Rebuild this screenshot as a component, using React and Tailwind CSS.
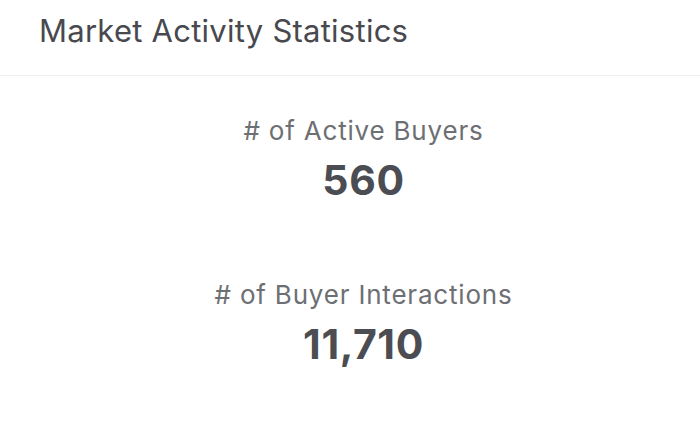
import React from 'react';

const stats = [
    { label: '# of Active Buyers', value: '560' },
    { label: '# of Buyer Interactions', value: '11,710' },
];

const App = () => {
    return (
        <div className="w-[700px] h-[436px] bg-white overflow-hidden" style={{ fontFamily: 'Inter, "Noto Sans", sans-serif' }}>
            {/* Header */}
            <div className="h-[76px] border-b border-[#ededed] px-[39px] pt-[12px]">
                <h2 className="text-[31px] leading-[38px] tracking-[0.25px] text-[#48494e]">Market Activity Statistics</h2>
            </div>

            {/* Stats */}
            <div className="flex flex-col items-center pl-[27px] pt-[39px] gap-[75px]">
                {stats.map((s) => (
                    <div key={s.label} className="flex flex-col items-center">
                        <span className="text-[26px] leading-[32px] tracking-[0.8px] text-[#6d6f73]">{s.label}</span>
                        <span className="text-[41px] leading-[48px] font-bold tracking-[0.6px] text-[#4b4d52] mt-[9px]">{s.value}</span>
                    </div>
                ))}
            </div>
        </div>
    );
};

export default App;
